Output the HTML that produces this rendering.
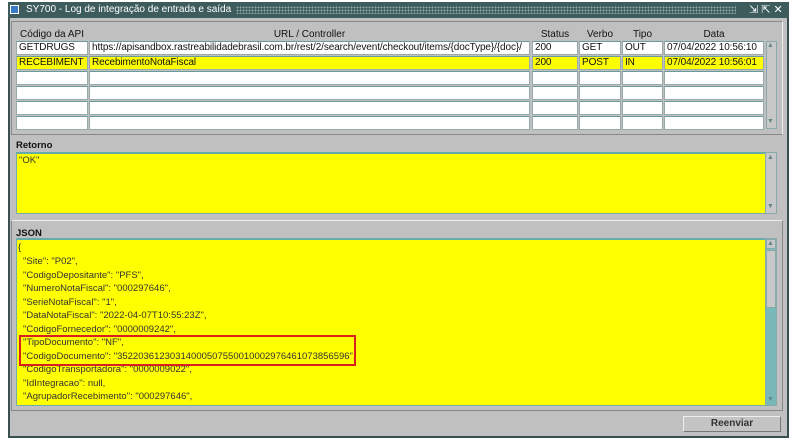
<!DOCTYPE html>
<html><head><style>
*{margin:0;padding:0;box-sizing:border-box}
body{width:795px;height:443px;background:#fff;position:relative;overflow:hidden;font-family:"Liberation Sans",Arial,sans-serif;font-size:10px;color:#111}
.a{position:absolute}
.win{left:8px;top:2px;width:781px;height:436px;background:#c0c0c0;border:2px solid #3b4f4f;border-top:none}
.title{left:8px;top:2px;width:781px;height:16px;background:#3e5c5c;color:#fff;font-size:10px;line-height:16px;padding-left:18px}
.dots{left:236px;top:6px;width:500px;height:8px;background-image:radial-gradient(#8aa 0.8px,transparent 1px);background-size:3px 3px}
.cell{position:absolute;height:14px;background:#fff;border:1px solid #9aa;border-top-color:#6a9a9a;line-height:12px;padding-left:2px;white-space:nowrap;overflow:hidden;font-size:10px;letter-spacing:-0.1px}
.y{background:#ffff00}
.hdr{position:absolute;top:29px;text-align:center;font-size:10px}
.sb{position:absolute;background:#c8c8c8;border:1px solid #8aa}
.lbl{position:absolute;font-weight:bold;font-size:9.5px}
.ta{position:absolute;background:#ffff00;border:1px solid #7aa;border-top:2px solid #6aa}
.js{position:absolute;left:23px;line-height:13.5px;color:#333;white-space:pre;font-size:9.5px}
</style></head><body>
<div class="a win"></div>
<div class="a title">SY700 - Log de integração de entrada e saída</div>
<div class="a" style="left:10px;top:5px;width:9px;height:9px;background:#3a7acb;border:1px solid #fff"></div>
<div class="a dots"></div>
<div class="a" style="left:749px;top:2px;color:#fff;font-size:11px;line-height:16px">⇲ ⇱ ✕</div>
<div class="a" style="left:11px;top:21px;width:772px;height:114px;border:1px solid #888;border-right-color:#eee;border-bottom-color:#888"></div>
<div class="hdr" style="left:16px;width:72px">Código da API</div>
<div class="hdr" style="left:89px;width:441px">URL / Controller</div>
<div class="hdr" style="left:532px;width:46px">Status</div>
<div class="hdr" style="left:579px;width:42px">Verbo</div>
<div class="hdr" style="left:622px;width:41px">Tipo</div>
<div class="hdr" style="left:664px;width:100px">Data</div>
<div id="rows"></div>
<div class="sb" style="left:766px;top:41px;width:11px;height:88px"></div>
<div class="a" style="left:767px;top:42px;color:#688;font-size:7px">▲</div>
<div class="a" style="left:767px;top:118px;color:#688;font-size:7px">▼</div>

<div class="lbl" style="left:16px;top:140px">Retorno</div>
<div class="ta" style="left:16px;top:152px;width:750px;height:62px"></div>
<div class="a" style="left:19px;top:155px;font-size:9.5px;color:#333">"OK"</div>
<div class="sb" style="left:765px;top:152px;width:12px;height:62px"></div>
<div class="a" style="left:767px;top:154px;color:#688;font-size:7px">▲</div>
<div class="a" style="left:767px;top:203px;color:#688;font-size:7px">▼</div>

<div class="a" style="left:11px;top:220px;width:772px;height:191px;border:1px solid #888;border-top-color:#eee"></div>
<div class="lbl" style="left:16px;top:228px">JSON</div>
<div class="ta" style="left:16px;top:238px;width:750px;height:168px"></div>
<div class="sb" style="left:765px;top:238px;width:12px;height:168px;background:#78b8b8"></div>
<div class="sb" style="left:766px;top:250px;width:10px;height:58px"></div>
<div class="sb" style="left:766px;top:239px;width:10px;height:10px"></div>
<div class="a" style="left:767px;top:240px;color:#688;font-size:7px">▲</div>
<div class="a" style="left:767px;top:396px;color:#688;font-size:7px">▼</div>
<div class="js" style="left:18px;top:241px">{</div>
<div class="js" style="top:255px">"Site": "P02",
"CodigoDepositante": "PFS",
"NumeroNotaFiscal": "000297646",
"SerieNotaFiscal": "1",
"DataNotaFiscal": "2022-04-07T10:55:23Z",
"CodigoFornecedor": "0000009242",
"TipoDocumento": "NF",
"CodigoDocumento": "35220361230314000507550010002976461073856596",
"CodigoTransportadora": "0000009022",
"IdIntegracao": null,
"AgrupadorRecebimento": "000297646",</div>
<div class="a" style="left:19px;top:335px;width:337px;height:31px;border:2px solid #d82020"></div>
<div class="a" style="left:683px;top:416px;width:98px;height:16px;background:#c4c4c4;border:1px solid #777;border-top-color:#eee;border-left-color:#eee;text-align:center;font-weight:bold;line-height:14px;color:#333;font-size:10px">Reenviar</div>
<script>
var cols=[[16,72],[89,441],[532,46],[579,42],[622,41],[664,100]];
var data=[["GETDRUGS","https://apisandbox.rastreabilidadebrasil.com.br/rest/2/search/event/checkout/items/{docType}/{doc}/","200","GET","OUT","07/04/2022 10:56:10"],["RECEBIMENT","RecebimentoNotaFiscal","200","POST","IN","07/04/2022 10:56:01"],["","","","","",""],["","","","","",""],["","","","","",""],["","","","","",""]];
var h="";
data.forEach(function(r,i){cols.forEach(function(c,j){h+='<div class="cell'+(i==1?' y':'')+'" style="left:'+c[0]+'px;top:'+(41+i*15)+'px;width:'+c[1]+'px">'+r[j]+'</div>';});});
document.getElementById("rows").innerHTML=h;
</script>
</body></html>
